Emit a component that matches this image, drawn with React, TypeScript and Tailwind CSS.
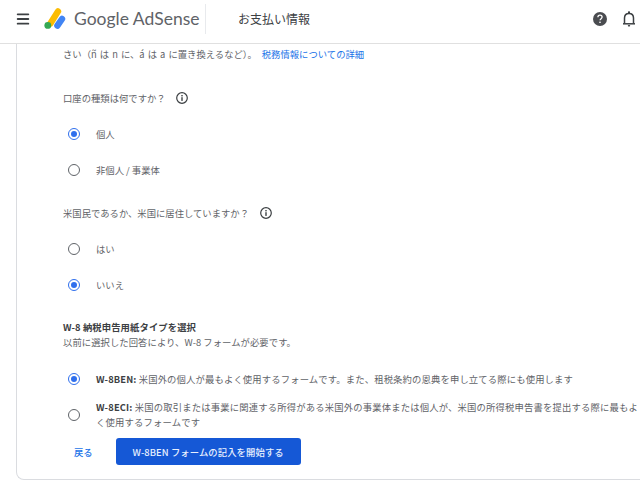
import { Menu } from 'lucide-react'

const font = "[font-family:'Noto_Sans_CJK_JP','Noto_Sans',sans-serif]"

function Radio({ checked }: { checked?: boolean }) {
  if (checked) {
    return (
      <span className="flex w-[12px] h-[12px] shrink-0 items-center justify-center rounded-full border-[1.5px] border-[#2f6fed]">
        <span className="w-[6px] h-[6px] rounded-full bg-[#2f6fed]" />
      </span>
    )
  }
  return <span className="block w-[12px] h-[12px] shrink-0 rounded-full border-[1.5px] border-[#5f6368]" />
}

function RadioRow({ checked, label, className }: { checked?: boolean; label: string; className: string }) {
  return (
    <div className={`flex items-center pl-[5px] ${className}`}>
      <Radio checked={checked} />
      <span className="ml-[16px] text-[9.33px] leading-[14px] text-[#5f6368]">{label}</span>
    </div>
  )
}

function InfoIcon({ className }: { className: string }) {
  return (
    <svg width="12" height="12" viewBox="0 0 12 12" fill="none" className={`shrink-0 ${className}`}>
      <circle cx="6" cy="6" r="5.3" stroke="#3c4043" strokeWidth="1.2" />
      <rect x="5.3" y="5.2" width="1.4" height="3.7" fill="#3c4043" />
      <rect x="5.3" y="3" width="1.4" height="1.4" fill="#3c4043" />
    </svg>
  )
}

function Logo() {
  return (
    <svg width="22" height="22" viewBox="0 0 22 22" className="shrink-0">
      <path d="M14 3.4 L6.4 15.5" stroke="#fbbc04" strokeWidth="6.4" strokeLinecap="round" />
      <path d="M18 11 L13.4 17.6" stroke="#4285f4" strokeWidth="6.4" strokeLinecap="round" />
      <circle cx="3.8" cy="17.4" r="3.4" fill="#34a853" />
    </svg>
  )
}

export default function App() {
  return (
    <div className={`w-[640px] h-[480px] overflow-hidden bg-white flex flex-col ${font}`}>
      {/* Header */}
      <header className="h-[44px] shrink-0 flex items-center border-b border-[#e0e0e0] pb-[5px] pl-[15px] pr-[3px]">
        <Menu size={16} strokeWidth={2.7} color="#3c4043" className="shrink-0" />
        <div className="ml-[13px]">
          <Logo />
        </div>
        <span className="ml-[8px] w-[116px] text-[17.5px] leading-[22px] text-[#5f6368] [font-family:'Lato',sans-serif] whitespace-nowrap">
          Google AdSense
        </span>
        <div className="ml-[15px] h-[30px] w-px bg-[#e8eaed]" />
        <span className="ml-[32px] text-[12px] leading-[18px] text-[#3c4043]">お支払い情報</span>
        <svg width="16" height="16" viewBox="0 0 16 16" className="ml-auto">
          <circle cx="8" cy="8" r="7" fill="#4a4c50" />
          <path d="M5.9 6.2c0-1.2 1-2 2.1-2s2.1.8 2.1 1.9c0 1.5-2 1.6-2 3.2" fill="none" stroke="#fff" strokeWidth="1.3" />
          <rect x="7.3" y="10.6" width="1.4" height="1.4" fill="#fff" />
        </svg>
        <svg width="16" height="18" viewBox="0 0 16 18" fill="none" className="ml-[13px]">
          <path d="M3.5 13.5V8c0-2.8 1.8-4.6 4.5-4.6s4.5 1.8 4.5 4.6v5.5" stroke="#3c4043" strokeWidth="1.5" />
          <path d="M2 13.8h12" stroke="#3c4043" strokeWidth="1.5" />
          <rect x="7" y="1.4" width="2" height="2" fill="#3c4043" />
          <rect x="6.8" y="15" width="2.4" height="1.6" rx="0.8" fill="#3c4043" />
        </svg>
      </header>

      {/* Card */}
      <main className="flex-1 min-h-0 ml-[16px] border-l border-b border-[#dadce0] rounded-bl-[8px] pl-[46px] overflow-hidden">
        <p className="mt-[3px] text-[9.33px] leading-[14px] text-[#5f6368] whitespace-nowrap [word-spacing:1px]">
          さい（ñ は n に、á は a に置き換えるなど）。
          <span className="ml-[5px] text-[#1a73e8]">税務情報についての詳細</span>
        </p>

        <div className="mt-[30px] flex items-center h-[14px]">
          <span className="text-[9.33px] leading-[14px] text-[#5f6368]">口座の種類は何ですか？</span>
          <InfoIcon className="ml-[10px]" />
        </div>
        <RadioRow checked label="個人" className="mt-[22px]" />
        <RadioRow label="非個人 / 事業体" className="mt-[22px]" />

        <div className="mt-[29px] flex items-center h-[14px]">
          <span className="text-[9.33px] leading-[14px] text-[#5f6368]">米国民であるか、米国に居住していますか？</span>
          <InfoIcon className="ml-[11px]" />
        </div>
        <RadioRow label="はい" className="mt-[22px]" />
        <RadioRow checked label="いいえ" className="mt-[22px]" />

        <h2 className="mt-[28px] text-[9.33px] leading-[14px] tracking-[0.1px] font-bold text-[#3c4043]">W-8 納税申告用紙タイプを選択</h2>
        <p className="mt-px text-[9.33px] leading-[14px] tracking-[0.06px] text-[#5f6368]">以前に選択した回答により、W-8 フォームが必要です。</p>

        <div className="mt-[23px] flex items-center pl-[5px] whitespace-nowrap">
          <Radio checked />
          <p className="ml-[16px] text-[9.33px] leading-[14px] tracking-[0.14px] text-[#5f6368]">
            <b className="text-[#3c4043]">W-8BEN:</b> 米国外の個人が最もよく使用するフォームです。また、租税条約の恩典を申し立てる際にも使用します
          </p>
        </div>
        <div className="mt-[14px] flex items-center pl-[5px]">
          <Radio />
          <p className="ml-[16px] w-[543px] shrink-0 text-[9.33px] leading-[15px] tracking-[0.17px] text-[#5f6368]">
            <b className="text-[#3c4043]">W-8ECI:</b> 米国の取引または事業に関連する所得がある米国外の事業体または個人が、米国の所得税申告書を提出する際に最もよく使用するフォームです
          </p>
        </div>

        <div className="mt-[8px] flex items-center">
          <span className="ml-[11px] text-[9.33px] font-medium text-[#1a73e8]">戻る</span>
          <button className="ml-[23px] h-[27px] w-[185px] rounded-[3px] bg-[#1558d6] text-[9.33px] tracking-[0.1px] font-medium text-[#e8f0fe]">
            W-8BEN フォームの記入を開始する
          </button>
        </div>
      </main>
    </div>
  )
}
